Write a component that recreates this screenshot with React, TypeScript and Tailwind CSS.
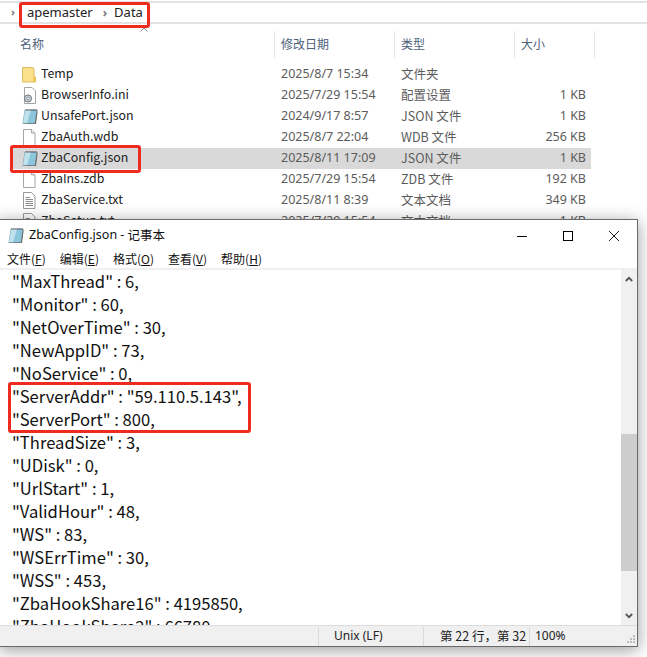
import React from "react";

const FONT = '"Noto Sans", "Noto Sans CJK SC", sans-serif';
const CJK = '"Noto Sans CJK SC", "Noto Sans", sans-serif';

const Folder = () => (
  <svg width="14" height="17" viewBox="0 0 14 17">
    <path d="M0.5 1.5 H10 Q12 1.5 12 3.5 V11 H13.5 V16 H0.5 Z" fill="#fbe08c" stroke="#dcbc62" />
    <rect x="11" y="11" width="2.5" height="5" fill="#f0c85a" />
  </svg>
);
const PlainDoc = () => (
  <svg width="14" height="17" viewBox="0 0 14 17">
    <path d="M1.5 .5 H9.5 L13 4 V16.5 H1.5 Z" fill="#fff" stroke="#a5a5a5" />
    <path d="M9.5 .5 V4 H13" fill="#eee" stroke="#a5a5a5" />
  </svg>
);
const TextDoc = () => (
  <svg width="14" height="17" viewBox="0 0 14 17">
    <path d="M1.5 .5 H9.5 L13 4 V16.5 H1.5 Z" fill="#fff" stroke="#9a9a9a" />
    <path d="M3.5 5.5 H8 M3.5 7.5 H11 M3.5 9.5 H11 M3.5 11.5 H11 M3.5 13.5 H11" stroke="#8b8b8b" />
  </svg>
);
const IniDoc = () => (
  <svg width="15" height="17" viewBox="0 0 15 17">
    <path d="M2.5 .5 H10 L13.5 4 V16.5 H2.5 Z" fill="#fff" stroke="#a5a5a5" />
    <circle cx="6" cy="11.5" r="3.6" fill="#c9ced4" stroke="#6f7780" />
    <circle cx="6" cy="11.5" r="1.3" fill="#fff" stroke="#6f7780" strokeWidth=".7" />
  </svg>
);
const NotepadIcon = () => (
  <svg width="16" height="17" viewBox="0 0 16 17">
    <path d="M3 2 H15 L13 15.5 H1 Z" fill="#8cc6dc" stroke="#6f8f9f" strokeWidth=".8" />
    <path d="M3 2 H9 L5 15.5 H1 Z" fill="#bfe2ee" />
    <path d="M4 1 V3 M6 1 V3 M8 1 V3 M10 1 V3 M12 1 V3 M14 1 V3" stroke="#555" strokeWidth=".8" />
    <path d="M13 15.5 L15 2 L15.6 4 L14 16 H1 V15.5 Z" fill="#666" />
  </svg>
);

type Row = { icon: React.ReactNode; name: string; date: string; type: string; size: string; sel?: boolean };
const rows: Row[] = [
  { icon: <Folder />, name: "Temp", date: "2025/8/7 15:34", type: "文件夹", size: "" },
  { icon: <IniDoc />, name: "BrowserInfo.ini", date: "2025/7/29 15:54", type: "配置设置", size: "1 KB" },
  { icon: <NotepadIcon />, name: "UnsafePort.json", date: "2024/9/17 8:57", type: "JSON 文件", size: "1 KB" },
  { icon: <PlainDoc />, name: "ZbaAuth.wdb", date: "2025/8/7 22:04", type: "WDB 文件", size: "256 KB" },
  { icon: <NotepadIcon />, name: "ZbaConfig.json", date: "2025/8/11 17:09", type: "JSON 文件", size: "1 KB", sel: true },
  { icon: <PlainDoc />, name: "ZbaIns.zdb", date: "2025/7/29 15:54", type: "ZDB 文件", size: "192 KB" },
  { icon: <TextDoc />, name: "ZbaService.txt", date: "2025/8/11 8:39", type: "文本文档", size: "349 KB" },
  { icon: <TextDoc />, name: "ZbaSetup.txt", date: "2025/7/29 15:54", type: "文本文档", size: "1 KB" },
];

const lines = [
  '"MaxThread" : 6,',
  '"Monitor" : 60,',
  '"NetOverTime" : 30,',
  '"NewAppID" : 73,',
  '"NoService" : 0,',
  '"ServerAddr" : "59.110.5.143",',
  '"ServerPort" : 800,',
  '"ThreadSize" : 3,',
  '"UDisk" : 0,',
  '"UrlStart" : 1,',
  '"ValidHour" : 48,',
  '"WS" : 83,',
  '"WSErrTime" : 30,',
  '"WSS" : 453,',
  '"ZbaHookShare16" : 4195850,',
  '"ZbaHookShare2" : 66780,',
];

const menus: [string, string][] = [["文件", "F"], ["编辑", "E"], ["格式", "O"], ["查看", "V"], ["帮助", "H"]];

export default function App() {
  return (
    <div className="relative w-[647px] h-[657px] overflow-hidden bg-white" style={{ fontFamily: FONT }}>
      {/* Explorer */}
      <div className="h-[2px] mt-px bg-[#e2e2e2]" />
      <div className="h-[21px] flex items-center pl-[11px] text-[13px] text-[#222] border-b-2 border-[#e2e2e2]">
        <span className="text-[#777] font-bold text-[11px] w-[16px]">›</span>
        <span>apemaster</span>
        <span className="text-[#777] font-bold text-[12px] ml-[10px] mr-[7px]">›</span>
        <span>Data</span>
      </div>
      <div className="relative flex h-[27px] mt-[7px] text-[12px] text-[#4c607a]" style={{ fontFamily: CJK }}>
        <div className="absolute left-[140px] -top-[4px]">
          <svg width="8" height="5" viewBox="0 0 8 5"><path d="M.5 4.5 L4 1 L7.5 4.5" fill="none" stroke="#888" /></svg>
        </div>
        <div className="w-[275px] pl-[20px] pb-[2px] flex items-center border-r border-[#e5e5e5]">名称</div>
        <div className="w-[120px] pl-[6px] pb-[2px] flex items-center border-r border-[#e5e5e5]">修改日期</div>
        <div className="w-[120px] pl-[6px] pb-[2px] flex items-center border-r border-[#e5e5e5]">类型</div>
        <div className="w-[80px] pl-[6px] pb-[2px] flex items-center border-r border-[#e5e5e5]">大小</div>
      </div>
      <div className="mt-[6px] ml-[12px] w-[579px] text-[12.5px] text-[#5c5c5c]">
        {rows.map((r) => (
          <div key={r.name} className={`flex items-center h-[21px] ${r.sel ? "bg-[#d9d9d9]" : ""}`}>
            <div className="w-[29px] pl-[10px] flex items-center shrink-0">{r.icon}</div>
            <div className="w-[240px] pb-[2px] text-[#222] text-[12.4px]" style={{ fontFamily: CJK }}>{r.name}</div>
            <div className="w-[120px]">{r.date}</div>
            <div className="w-[95px]" style={{ fontFamily: CJK }}>{r.type}</div>
            <div className="w-[95px] text-right pr-[5px]">{r.size}</div>
          </div>
        ))}
      </div>

      {/* Notepad window */}
      <div
        className="absolute left-[-2px] top-[219px] w-[640px] h-[428px] flex flex-col bg-white border border-[#6a6a6a] shadow-[0_3px_16px_rgba(0,0,0,0.4)]"
        style={{ fontFamily: CJK }}
      >
        <div className="h-[31px] flex items-center shrink-0 pl-[9px] text-[12.5px] text-[#111]">
          <NotepadIcon />
          <span className="ml-[5px]" style={{ fontFamily: FONT }}>ZbaConfig.json - </span>
          <span className="ml-[3px]">记事本</span>
          <div className="ml-auto flex items-center">
            <svg width="10" height="10" viewBox="0 0 10 10"><path d="M0 5.5 H10" stroke="#000" /></svg>
            <svg className="ml-[36px]" width="10" height="10" viewBox="0 0 10 10"><rect x=".5" y=".5" width="9" height="9" fill="none" stroke="#000" /></svg>
            <svg className="ml-[36px] mr-[18px]" width="10" height="10" viewBox="0 0 10 10"><path d="M0 0 L10 10 M10 0 L0 10" stroke="#000" strokeWidth=".9" /></svg>
          </div>
        </div>
        <div className="h-[17px] flex items-center shrink-0 pl-[8px] pb-[2px] gap-[14px] text-[12px] text-[#111]">
          {menus.map(([m, k]) => (
            <span key={m}>
              {m}(<span className="underline">{k}</span>)
            </span>
          ))}
        </div>
        <div className="h-[2px] shrink-0 bg-[#f0f0f0]" />
        <div className="flex flex-1 min-h-0">
          <div className="flex-1 overflow-hidden pl-[13px] text-[16.6px] leading-[23px] text-[#111] whitespace-pre">
            {lines.map((l) => (
              <div key={l}>{l}</div>
            ))}
          </div>
          <div className="w-[16px] shrink-0 bg-[#f0f0f0] flex flex-col items-center justify-between">
            <div className="w-full flex flex-col items-center">
              <svg className="mt-[6px]" width="8" height="6" viewBox="0 0 8 6"><path d="M.8 5 L4 1.8 L7.2 5" fill="none" stroke="#555" strokeWidth="1.8" /></svg>
              <div className="w-full h-[137px] mt-[152px] bg-[#cdcdcd]" />
            </div>
            <svg className="mb-[6px]" width="8" height="6" viewBox="0 0 8 6"><path d="M.8 1 L4 4.2 L7.2 1" fill="none" stroke="#555" strokeWidth="1.8" /></svg>
          </div>
        </div>
        <div className="h-[21px] shrink-0 flex items-center bg-[#f0f0f0] border-t border-[#dcdcdc] text-[12px] text-[#222]">
          <div className="w-[320px] h-[19px] border-r border-[#d9d9d9]" />
          <div className="w-[105px] h-[19px] pl-[15px] flex items-center border-r border-[#d9d9d9]" style={{ fontFamily: FONT }}>Unix (LF)</div>
          <div className="w-[106px] h-[19px] pl-[16px] flex items-center border-r border-[#d9d9d9] whitespace-nowrap overflow-hidden text-[12.5px]">第 22 行，第 32</div>
          <div className="pl-[5px]" style={{ fontFamily: FONT }}>100%</div>
          <svg className="ml-auto self-end mb-[2px] mr-[1px]" width="10" height="10" viewBox="0 0 10 10" fill="#bdbdbd">
            <rect x="7" y="1" width="2" height="2" /><rect x="4" y="4" width="2" height="2" /><rect x="7" y="4" width="2" height="2" />
            <rect x="1" y="7" width="2" height="2" /><rect x="4" y="7" width="2" height="2" /><rect x="7" y="7" width="2" height="2" />
          </svg>
        </div>
      </div>

      {/* Red annotation boxes */}
      <div className="absolute left-[19px] top-[2px] w-[131px] h-[26px] border-[3px] border-[#ef2b20] rounded-[3px]" />
      <div className="absolute left-[10px] top-[145px] w-[131px] h-[28px] border-[3px] border-[#ef2b20] rounded-[3px]" />
      <div className="absolute left-[8px] top-[382px] w-[243px] h-[51px] border-[3px] border-[#ef2b20] rounded-[3px]" />
    </div>
  );
}
